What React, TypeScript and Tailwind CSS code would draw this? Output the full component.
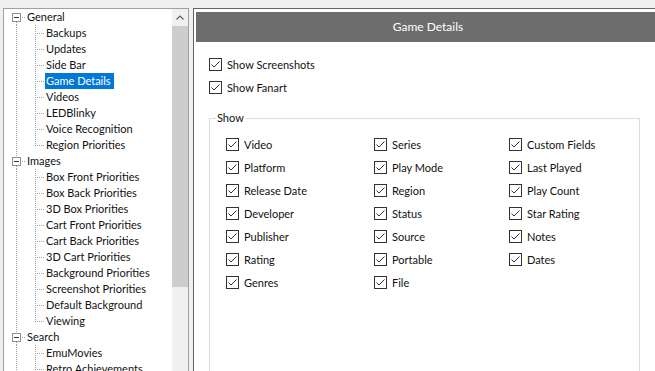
import React from "react";

type TreeRow = {
  label: string;
  level: 0 | 1;
  first?: boolean;
  last?: boolean;
  selected?: boolean;
};

const treeRows: TreeRow[] = [
  { label: "General", level: 0, first: true },
  { label: "Backups", level: 1 },
  { label: "Updates", level: 1 },
  { label: "Side Bar", level: 1 },
  { label: "Game Details", level: 1, selected: true },
  { label: "Videos", level: 1 },
  { label: "LEDBlinky", level: 1 },
  { label: "Voice Recognition", level: 1 },
  { label: "Region Priorities", level: 1, last: true },
  { label: "Images", level: 0 },
  { label: "Box Front Priorities", level: 1 },
  { label: "Box Back Priorities", level: 1 },
  { label: "3D Box Priorities", level: 1 },
  { label: "Cart Front Priorities", level: 1 },
  { label: "Cart Back Priorities", level: 1 },
  { label: "3D Cart Priorities", level: 1 },
  { label: "Background Priorities", level: 1 },
  { label: "Screenshot Priorities", level: 1 },
  { label: "Default Background", level: 1 },
  { label: "Viewing", level: 1, last: true },
  { label: "Search", level: 0 },
  { label: "EmuMovies", level: 1 },
  { label: "Retro Achievements", level: 1 },
  { label: "Platforms", level: 1 },
];

// grid-flow-col: 7 per column
const showItems = [
  "Video",
  "Platform",
  "Release Date",
  "Developer",
  "Publisher",
  "Rating",
  "Genres",
  "Series",
  "Play Mode",
  "Region",
  "Status",
  "Source",
  "Portable",
  "File",
  "Custom Fields",
  "Last Played",
  "Play Count",
  "Star Rating",
  "Notes",
  "Dates",
];

const DOT = "#a0a0a0";

const ParentConnector = ({ first }: { first?: boolean }) => (
  <svg width="19" height="16" className="shrink-0" shapeRendering="crispEdges">
    {!first && (
      <line x1="9.5" y1="0" x2="9.5" y2="4" stroke={DOT} strokeDasharray="1 1" />
    )}
    <line x1="9.5" y1="13" x2="9.5" y2="16" stroke={DOT} strokeDasharray="1 1" />
    <rect x="5.5" y="4.5" width="8" height="8" fill="#fff" stroke="#919191" />
    <line x1="7" y1="8.5" x2="12" y2="8.5" stroke="#333" />
    <line x1="15" y1="8.5" x2="19" y2="8.5" stroke={DOT} strokeDasharray="1 1" />
  </svg>
);

const ChildConnector = ({ last }: { last?: boolean }) => (
  <>
    <svg width="19" height="16" className="shrink-0" shapeRendering="crispEdges">
      <line x1="9.5" y1="0" x2="9.5" y2="16" stroke={DOT} strokeDasharray="1 1" />
    </svg>
    <svg width="19" height="16" className="shrink-0" shapeRendering="crispEdges">
      <line
        x1="9.5"
        y1="0"
        x2="9.5"
        y2={last ? 9 : 16}
        stroke={DOT}
        strokeDasharray="1 1"
      />
      <line x1="11" y1="8.5" x2="19" y2="8.5" stroke={DOT} strokeDasharray="1 1" />
    </svg>
  </>
);

const CheckBox = () => (
  <svg width="13" height="13" className="shrink-0" shapeRendering="crispEdges">
    <rect x="0.5" y="0.5" width="12" height="12" fill="#fff" stroke="#333" />
    <polyline
      points="2.5,6.5 5,9 10.5,3.5"
      fill="none"
      stroke="#333"
      strokeWidth="1"
      shapeRendering="geometricPrecision"
    />
  </svg>
);

const CheckItem = ({ label }: { label: string }) => (
  <div className="flex items-center gap-[5px] h-[23px]">
    <CheckBox />
    <span>{label}</span>
  </div>
);

export default function App() {
  return (
    <div
      className="h-[371px] w-[655px] overflow-hidden bg-[#f0f0f0] text-[#111] text-[11.5px] leading-[16px] flex gap-[4px] pt-[8px] pl-[3px]"
      style={{ fontFamily: "Lato, 'Liberation Sans', sans-serif" }}
    >
      {/* --- Tree --- */}
      <div className="w-[186px] h-[420px] shrink-0 bg-white border border-[#a0a0a0] flex">
        <div className="flex-1 pl-[3px] text-[11px]">
          {treeRows.map((row) => (
            <div key={row.label} className="flex h-[16px] items-center">
              {row.level === 0 ? (
                <ParentConnector first={row.first} />
              ) : (
                <ChildConnector last={row.last} />
              )}
              <span
                className={`pl-[1px] pr-[3px] h-[16px] whitespace-nowrap ${
                  row.selected ? "bg-[#0078d7] text-white" : ""
                }`}
              >
                {row.label}
              </span>
            </div>
          ))}
        </div>

        {/* scrollbar */}
        <div className="w-[16px] bg-[#f0f0f0] flex flex-col">
          <div className="h-[17px] flex items-center justify-center">
            <svg width="8" height="5">
              <polyline points="0.5,4.5 4,1 7.5,4.5" fill="none" stroke="#606060" strokeWidth="1.2" />
            </svg>
          </div>
          <div className="h-[261px] bg-[#cdcdcd]" />
        </div>
      </div>

      {/* --- Details panel --- */}
      <div className="w-[470px] h-[420px] shrink-0 bg-white border border-[#646464] pt-[3px] px-[2px]">
        <div className="h-[30px] bg-[#6d6d6d] text-white text-[12px] flex items-center justify-center">
          Game Details
        </div>

        <div className="pl-[13px] pt-[11px] text-[11px]">
          <CheckItem label="Show Screenshots" />
          <CheckItem label="Show Fanart" />

          <fieldset className="mt-[11px] w-[431px] h-[300px] border border-[#dcdcdc]">
            <legend className="ml-[6px] px-[1px] h-[16px]">Show</legend>
            <div className="grid grid-flow-col grid-rows-7 grid-cols-[148px_135px_1fr] pl-[16px] pt-[7px]">
              {showItems.map((item) => (
                <CheckItem key={item} label={item} />
              ))}
            </div>
          </fieldset>
        </div>
      </div>
    </div>
  );
}
